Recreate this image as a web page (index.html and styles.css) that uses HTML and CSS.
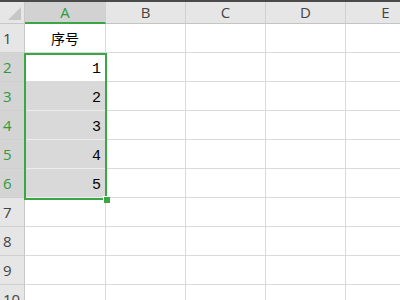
FILE: index.html
```html
<!doctype html>
<html>
<head>
  <title>Sheet1</title>
  <meta charset="utf-8">
  <link rel="stylesheet" href="styles.css">
</head>
<body>
  <div class="topbar"></div>
  <div id="sheet" class="sheet">
    <div class="corner"><span class="tri"></span></div>
    <div class="colhead active">A</div>
    <div class="colhead">B</div>
    <div class="colhead">C</div>
    <div class="colhead">D</div>
    <div class="colhead">E</div>

    <div class="rowhead">1</div>
    <div class="cell center">序号</div>
    <div class="cell"></div><div class="cell"></div><div class="cell"></div><div class="cell"></div>

    <div class="rowhead active">2</div>
    <div class="cell num">1</div>
    <div class="cell"></div><div class="cell"></div><div class="cell"></div><div class="cell"></div>

    <div class="rowhead active">3</div>
    <div class="cell num sel">2</div>
    <div class="cell"></div><div class="cell"></div><div class="cell"></div><div class="cell"></div>

    <div class="rowhead active">4</div>
    <div class="cell num sel">3</div>
    <div class="cell"></div><div class="cell"></div><div class="cell"></div><div class="cell"></div>

    <div class="rowhead active">5</div>
    <div class="cell num sel">4</div>
    <div class="cell"></div><div class="cell"></div><div class="cell"></div><div class="cell"></div>

    <div class="rowhead active">6</div>
    <div class="cell num sel">5</div>
    <div class="cell"></div><div class="cell"></div><div class="cell"></div><div class="cell"></div>

    <div class="rowhead">7</div>
    <div class="cell"></div><div class="cell"></div><div class="cell"></div><div class="cell"></div><div class="cell"></div>

    <div class="rowhead">8</div>
    <div class="cell"></div><div class="cell"></div><div class="cell"></div><div class="cell"></div><div class="cell"></div>

    <div class="rowhead">9</div>
    <div class="cell"></div><div class="cell"></div><div class="cell"></div><div class="cell"></div><div class="cell"></div>

    <div class="rowhead">10</div>
    <div class="cell"></div><div class="cell"></div><div class="cell"></div><div class="cell"></div><div class="cell"></div>

    <div class="selection"><span class="handle"></span></div>
  </div>
</body>
</html>
```

FILE: styles.css
```css
body{
  margin:0;
  width:400px;
  height:300px;
  overflow:hidden;
  background:#fff;
  font-family:"Liberation Sans", "Noto Sans CJK SC", sans-serif;
}
.topbar{
  height:2px;
  background:#4a4a4a;
}
.sheet{
  position:relative;
  display:grid;
  grid-template-columns:25px 81px 80px 80px 80px 80px;
  grid-template-rows:22px repeat(10, 29px);
  width:400px;
  height:298px;
  overflow:hidden;
}
.corner{
  position:relative;
  background:#e6e6e6;
  border-right:1px solid #c8c8c8;
  border-bottom:1px solid #c8c8c8;
  box-sizing:border-box;
}
.tri{
  position:absolute;
  right:3px;
  bottom:3px;
  width:0;
  height:0;
  border-left:13px solid transparent;
  border-bottom:13px solid #c6c6c6;
}
.colhead{
  background:#e6e6e6;
  border-right:1px solid #d0d0d0;
  border-bottom:1px solid #c4c4c4;
  box-sizing:border-box;
  color:#444;
  font-family:"Open Sans", "Liberation Sans", sans-serif;
  font-size:15px;
  line-height:21px;
  text-align:center;
}
.colhead.active{
  background:#d2d2d2;
  color:#2f9a3c;
  border-bottom:2px solid #3aa744;
  line-height:20px;
}
.rowhead{
  background:#e6e6e6;
  border-right:1px solid #c8c8c8;
  border-bottom:1px solid #d0d0d0;
  box-sizing:border-box;
  color:#444;
  font-family:"Open Sans", "Liberation Sans", sans-serif;
  font-size:15px;
  line-height:28px;
  padding-left:3px;
}
.rowhead.active{
  background:#d4d4d4;
  color:#2f9a3c;
}
.cell{
  border-right:1px solid #dadada;
  border-bottom:1px solid #dadada;
  box-sizing:border-box;
  font-size:14px;
  line-height:28px;
  color:#000;
}
.center{
  text-align:center;
  font-family:"Noto Sans CJK SC", sans-serif;
  font-size:14px;
}
.num{
  text-align:right;
  padding-right:4px;
  padding-top:3px;
  font-family:"Liberation Mono", "DejaVu Sans Mono", monospace;
  font-size:15px;
}
.sel{
  background:#d9d9d9;
  border-bottom-color:#ececec;
}
.selection{
  position:absolute;
  left:24px;
  top:51px;
  width:79px;
  height:143px;
  border:2px solid #3aa744;
  pointer-events:none;
}
.handle{
  position:absolute;
  right:-5px;
  bottom:-5px;
  width:6px;
  height:6px;
  background:#3aa744;
  border-left:1px solid #fff;
  border-top:1px solid #fff;
}
```
